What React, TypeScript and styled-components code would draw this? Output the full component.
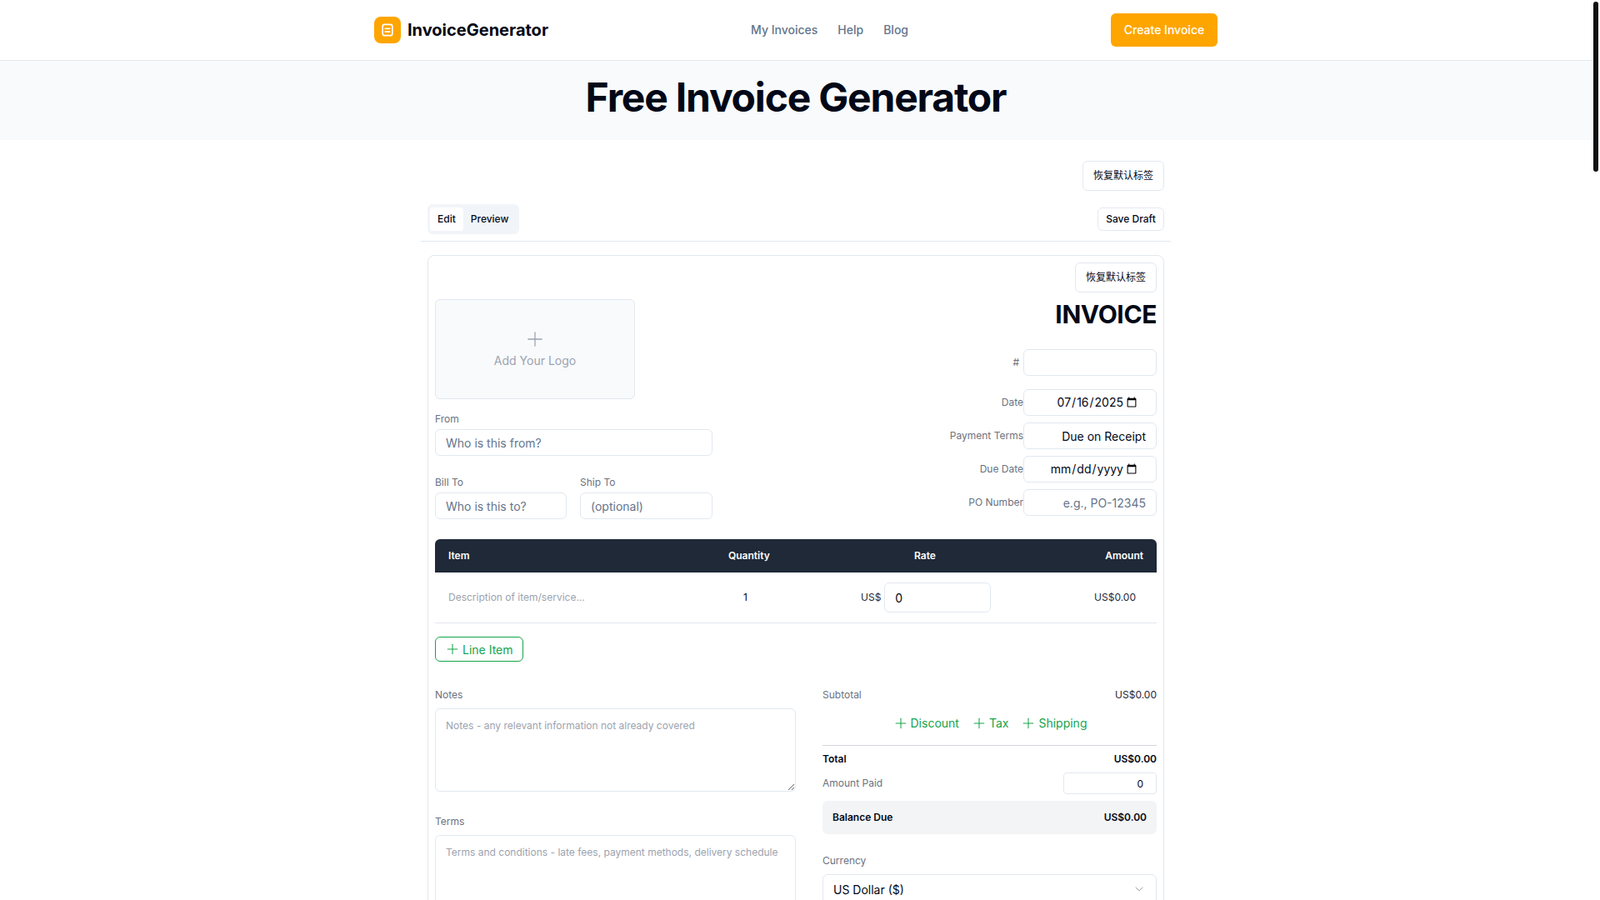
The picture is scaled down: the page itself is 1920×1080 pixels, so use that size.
import React from "react";
import styled, { createGlobalStyle } from "styled-components";
import { Plus, ChevronDown } from "lucide-react";

const Global = createGlobalStyle`
  html, body { margin: 0; padding: 0; height: 100%; overflow: hidden; background: #fff; }
  * { box-sizing: border-box; }
  body { font-family: Inter, "Noto Sans CJK SC", sans-serif; color: #020817; }
  input, textarea, button { font-family: inherit; }
`;

const Page = styled.div`
  width: 1910px;
  height: 100vh;
  overflow: hidden;
  background: #fff;
`;

const ScrollThumb = styled.div`
  position: fixed;
  top: 2px;
  right: 2px;
  width: 6px;
  height: 204px;
  border-radius: 3px;
  background: #111;
`;

const Header = styled.header`
  height: 73px;
  border-bottom: 1px solid #e2e8f0;
`;

const HeaderBar = styled.div`
  width: 1012px;
  height: 72px;
  margin: 0 auto;
  display: flex;
  align-items: center;
  justify-content: space-between;
`;

const Brand = styled.div`
  display: flex;
  align-items: center;
  gap: 8px;
`;

const LogoMark = styled.div`
  width: 32px;
  height: 32px;
  border-radius: 8px;
  background: #ffa500;
  display: flex;
  align-items: center;
  justify-content: center;
`;

const BrandName = styled.span`
  font-size: 20px;
  font-weight: 700;
  line-height: 28px;
  color: #020817;
`;

const Nav = styled.nav`
  display: flex;
  gap: 24px;
`;

const NavLink = styled.a`
  font-size: 14px;
  font-weight: 500;
  line-height: 20px;
  color: #64748b;
`;

const CreateButton = styled.button`
  width: 128px;
  height: 40px;
  border: 0;
  border-radius: 6px;
  padding: 0 0 1px;
  background: #ffa500;
  color: #fff;
  font-size: 14px;
  font-weight: 500;
`;

const Hero = styled.section`
  height: 95px;
  background: #f8fafc;
  padding-top: 20px;
  text-align: center;
`;

const HeroTitle = styled.h1`
  margin: 0;
  font-size: 48px;
  line-height: 48px;
  font-weight: 700;
  letter-spacing: -1.2px;
  color: #020817;
`;

const Main = styled.main`
  width: 900px;
  margin: 0 auto;
  padding: 25px 8px 0;
`;

const OutlineButton = styled.button<{ $h?: number; $w?: number; $weight?: number }>`
  height: ${(p) => p.$h ?? 36}px;
  width: ${(p) => p.$w ?? 98}px;
  padding: 0;
  border: 1px solid #e2e8f0;
  border-radius: 6px;
  background: #fff;
  color: #020817;
  font-size: 12px;
  line-height: 16px;
  font-weight: ${(p) => p.$weight ?? 400};
`;

const ActionRow = styled.div`
  display: flex;
  justify-content: flex-end;
`;

const Toolbar = styled.div`
  display: flex;
  justify-content: space-between;
  align-items: center;
  margin: 16px -8px 0;
  padding: 0 8px 8px;
  border-bottom: 1px solid #e2e8f0;
  height: 45px;
`;

const Tabs = styled.div`
  width: 110px;
  height: 36px;
  padding: 4px 3px;
  display: flex;
  border-radius: 6px;
  background: #f1f5f9;
`;

const Tab = styled.button<{ $active?: boolean }>`
  border: 0;
  border-radius: 4px;
  height: 28px;
  padding: 0 9px 1px;
  background: ${(p) => (p.$active ? "#fff" : "transparent")};
  color: #020817;
  font-size: 12px;
  font-weight: 500;
`;

const Card = styled.div`
  margin-top: 16px;
  border: 1px solid #e2e8f0;
  border-radius: 8px;
  padding: 8px;
`;

const TopGrid = styled.div`
  display: flex;
  justify-content: space-between;
  margin-top: 8px;
`;

const LeftCol = styled.div`
  width: 333px;
`;

const LogoBox = styled.div`
  width: 240px;
  height: 120px;
  border: 1px solid #e2e8f0;
  border-radius: 6px;
  background: #f8fafc;
  color: #9ca3af;
  font-size: 14px;
  display: flex;
  flex-direction: column;
  align-items: center;
  justify-content: center;
  line-height: 20px;
  gap: 2px;
  padding-bottom: 2px;
`;

const Field = styled.div<{ $mt?: number }>`
  margin-top: ${(p) => p.$mt ?? 0}px;
  min-width: 0;
`;

const Label = styled.label`
  display: block;
  font-size: 12px;
  line-height: 16px;
  color: #6b7280;
  margin-bottom: 4px;
`;

const TextInput = styled.input<{ $align?: string }>`
  display: block;
  width: 100%;
  height: 32px;
  padding: 0 12px;
  border: 1px solid #e2e8f0;
  border-radius: 6px;
  background: #fff;
  color: #020817;
  font-size: 14px;
  text-align: ${(p) => p.$align ?? "left"};
  outline: none;
  &::placeholder { color: #64748b; opacity: 1; }
`;

const TwoCols = styled.div`
  display: grid;
  grid-template-columns: 158px 159px;
  gap: 16px;
  margin-top: 24px;
`;

const RightCol = styled.div`
  width: 340px;
  display: flex;
  flex-direction: column;
  align-items: flex-end;
`;

const InvoiceTitle = styled.h2`
  margin: 0;
  font-size: 30px;
  line-height: 36px;
  font-weight: 700;
  letter-spacing: -0.4px;
  color: #020817;
`;

const MetaRow = styled.div<{ $mt?: number; $gap?: number }>`
  display: flex;
  align-items: center;
  justify-content: flex-end;
  width: 100%;
  gap: ${(p) => p.$gap ?? 0}px;
  margin-top: ${(p) => p.$mt ?? 8}px;
`;

const MetaLabel = styled.span`
  font-size: 12px;
  line-height: 16px;
  color: #6b7280;
`;

const MetaInput = styled(TextInput)`
  width: 160px;
  flex: none;
`;

const DateInput = styled(MetaInput)`
  padding: 0 20px 1px 12px;
`;

const Table = styled.div`
  margin-top: 24px;
`;

const THead = styled.div`
  height: 40px;
  background: #1f2937;
  border-radius: 6px 6px 0 0;
  color: #fff;
  font-size: 12px;
  font-weight: 600;
  display: grid;
  grid-template-columns: 336px 223px 1fr;
  align-items: center;
  padding: 0 16px 1px;
`;

const HeadRight = styled.div`
  display: flex;
  justify-content: space-between;
`;

const TRow = styled.div`
  height: 61px;
  border-bottom: 1px solid #e2e8f0;
  display: flex;
  align-items: center;
  padding-left: 16px;
  font-size: 12px;
  color: #020817;
`;

const RowCell = styled.span`
  margin-bottom: 1px;
`;

const Desc = styled(RowCell)`
  width: 354px;
  color: #9ca3af;
`;

const Qty = styled(RowCell)`
  width: 141px;
`;

const Currency = styled(RowCell)`
  margin-right: 4px;
  color: #1f2937;
`;

const RateInput = styled(TextInput)`
  width: 128px;
  height: 36px;
  padding: 0 12px;
`;

const RowAmount = styled(RowCell)`
  margin-left: auto;
  margin-right: 25px;
  color: #1f2937;
`;

const LineItemButton = styled.button`
  margin-top: 16px;
  width: 106px;
  height: 30px;
  border: 1px solid #16a34a;
  border-radius: 6px;
  background: #fff;
  color: #16a34a;
  font-size: 14px;
  display: flex;
  align-items: center;
  gap: 2px;
  padding: 0 0 0 10px;
`;

const Bottom = styled.div`
  display: flex;
  gap: 32px;
  margin-top: 32px;
`;

const NotesCol = styled.div`
  width: 433px;
`;

const TotalsCol = styled.div`
  flex: 1;
  min-width: 0;
`;

const Area = styled.textarea<{ $h: number }>`
  display: block;
  width: 100%;
  height: ${(p) => p.$h}px;
  padding: 10px 12px;
  border: 1px solid #e2e8f0;
  border-radius: 6px;
  background: #fff;
  color: #020817;
  font-size: 12px;
  line-height: 20px;
  outline: none;
  margin-top: 8px;
  &::placeholder { color: #9ca3af; opacity: 1; }
`;

const NoteLabel = styled.div<{ $mt?: number }>`
  font-size: 12px;
  line-height: 16px;
  color: #6b7280;
  margin-top: ${(p) => p.$mt ?? 0}px;
`;

const TotalRow = styled.div<{ $strong?: boolean }>`
  display: flex;
  justify-content: space-between;
  align-items: center;
  font-size: 12px;
  line-height: 16px;
  font-weight: ${(p) => (p.$strong ? 600 : 400)};
  color: ${(p) => (p.$strong ? "#020817" : "#1f2937")};
`;

const Muted = styled.span`
  color: #6b7280;
`;

const AddRow = styled.div`
  display: flex;
  justify-content: center;
  gap: 14px;
  height: 36px;
  margin-top: 8px;
  align-items: center;
`;

const AddLink = styled.button`
  border: 0;
  background: none;
  padding: 0;
  color: #16a34a;
  font-size: 14px;
  line-height: 20px;
  display: flex;
  align-items: center;
  gap: 2px;
`;

const Rule = styled.div`
  height: 1px;
  background: #d1d5db;
  margin: 8px 0;
`;

const PaidRow = styled(TotalRow)`
  margin-top: 8px;
`;

const PaidInput = styled.input`
  width: 112px;
  height: 26px;
  border: 1px solid #e2e8f0;
  border-radius: 4px;
  padding: 0 15px;
  text-align: right;
  font-size: 12px;
  color: #020817;
  outline: none;
`;

const BalanceBar = styled.div`
  height: 40px;
  margin-top: 8px;
  padding: 0 12px 1px;
  border-radius: 6px;
  background: #f3f4f6;
  display: flex;
  align-items: center;
  justify-content: space-between;
  font-size: 12px;
  font-weight: 600;
  color: #020817;
`;

const SelectBox = styled.div`
  height: 36px;
  margin-top: 8px;
  padding: 0 12px;
  border: 1px solid #e2e8f0;
  border-radius: 6px;
  display: flex;
  align-items: center;
  justify-content: space-between;
  font-size: 14px;
  color: #020817;
`;

const DocIcon = () => (
  <svg width="20" height="20" viewBox="0 0 24 24" fill="none" stroke="#fff" strokeWidth="2" strokeLinecap="round" strokeLinejoin="round">
    <rect x="5" y="4" width="14" height="16" rx="3" />
    <path d="M8.5 10h7M8.5 14.5h7" />
  </svg>
);

const AddLine = ({ label }: { label: string }) => (
  <AddLink>
    <Plus size={20} strokeWidth={1.25} />
    {label}
  </AddLink>
);

export default function App() {
  return (
    <Page>
      <Global />
      <ScrollThumb />
      <Header>
        <HeaderBar>
          <Brand>
            <LogoMark><DocIcon /></LogoMark>
            <BrandName>InvoiceGenerator</BrandName>
          </Brand>
          <Nav>
            <NavLink>My Invoices</NavLink>
            <NavLink>Help</NavLink>
            <NavLink>Blog</NavLink>
          </Nav>
          <CreateButton>Create Invoice</CreateButton>
        </HeaderBar>
      </Header>
      <Hero>
        <HeroTitle>Free Invoice Generator</HeroTitle>
      </Hero>
      <Main>
        <ActionRow>
          <OutlineButton>恢复默认标签</OutlineButton>
        </ActionRow>
        <Toolbar>
          <Tabs>
            <Tab $active>Edit</Tab>
            <Tab>Preview</Tab>
          </Tabs>
          <OutlineButton $h={28} $w={80} $weight={500}>Save Draft</OutlineButton>
        </Toolbar>
        <Card>
          <ActionRow>
            <OutlineButton>恢复默认标签</OutlineButton>
          </ActionRow>
          <TopGrid>
            <LeftCol>
              <LogoBox>
                <Plus size={28} strokeWidth={1.1} color="#9ca3af" />
                Add Your Logo
              </LogoBox>
              <Field $mt={16}>
                <Label>From</Label>
                <TextInput placeholder="Who is this from?" readOnly />
              </Field>
              <TwoCols>
                <Field>
                  <Label>Bill To</Label>
                  <TextInput placeholder="Who is this to?" readOnly />
                </Field>
                <Field>
                  <Label>Ship To</Label>
                  <TextInput placeholder="(optional)" readOnly />
                </Field>
              </TwoCols>
            </LeftCol>
            <RightCol>
              <InvoiceTitle>INVOICE</InvoiceTitle>
              <MetaRow $mt={24} $gap={5}>
                <MetaLabel>#</MetaLabel>
                <MetaInput readOnly />
              </MetaRow>
              <MetaRow $mt={16}>
                <MetaLabel>Date</MetaLabel>
                <DateInput type="date" defaultValue="2025-07-16" $align="right" />
              </MetaRow>
              <MetaRow>
                <MetaLabel>Payment Terms</MetaLabel>
                <MetaInput defaultValue="Due on Receipt" $align="right" readOnly />
              </MetaRow>
              <MetaRow>
                <MetaLabel>Due Date</MetaLabel>
                <DateInput type="date" $align="right" />
              </MetaRow>
              <MetaRow>
                <MetaLabel>PO Number</MetaLabel>
                <MetaInput placeholder="e.g., PO-12345" $align="right" readOnly />
              </MetaRow>
            </RightCol>
          </TopGrid>
          <Table>
            <THead>
              <span>Item</span>
              <span>Quantity</span>
              <HeadRight>
                <span>Rate</span>
                <span>Amount</span>
              </HeadRight>
            </THead>
            <TRow>
              <Desc>Description of item/service...</Desc>
              <Qty>1</Qty>
              <Currency>US$</Currency>
              <RateInput defaultValue="0" readOnly />
              <RowAmount>US$0.00</RowAmount>
            </TRow>
          </Table>
          <LineItemButton>
            <Plus size={20} strokeWidth={1.25} />
            Line Item
          </LineItemButton>
          <Bottom>
            <NotesCol>
              <NoteLabel>Notes</NoteLabel>
              <Area $h={100} placeholder="Notes - any relevant information not already covered" readOnly />
              <NoteLabel $mt={28}>Terms</NoteLabel>
              <Area $h={100} placeholder="Terms and conditions - late fees, payment methods, delivery schedule" readOnly />
            </NotesCol>
            <TotalsCol>
              <TotalRow>
                <Muted>Subtotal</Muted>
                <span>US$0.00</span>
              </TotalRow>
              <AddRow>
                <AddLine label="Discount" />
                <AddLine label="Tax" />
                <AddLine label="Shipping" />
              </AddRow>
              <Rule />
              <TotalRow $strong>
                <span>Total</span>
                <span>US$0.00</span>
              </TotalRow>
              <PaidRow>
                <Muted>Amount Paid</Muted>
                <PaidInput defaultValue="0" readOnly />
              </PaidRow>
              <BalanceBar>
                <span>Balance Due</span>
                <span>US$0.00</span>
              </BalanceBar>
              <NoteLabel $mt={24}>Currency</NoteLabel>
              <SelectBox>
                <span>US Dollar ($)</span>
                <ChevronDown size={16} strokeWidth={1.5} color="#9ca3af" />
              </SelectBox>
            </TotalsCol>
          </Bottom>
        </Card>
      </Main>
    </Page>
  );
}
